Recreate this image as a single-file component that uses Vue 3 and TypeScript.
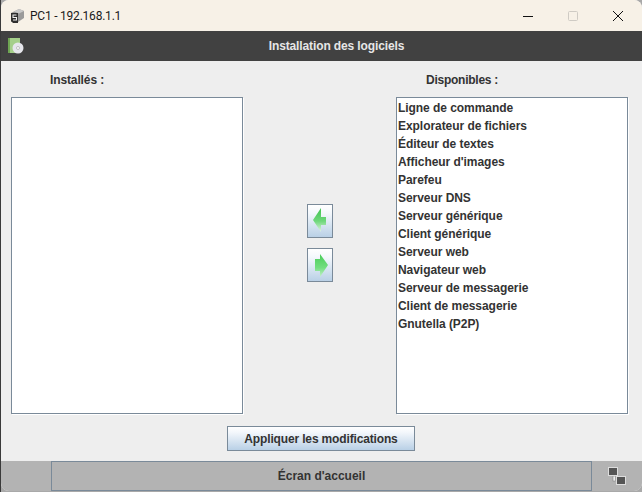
<script setup lang="ts">
const available: string[] = [
  'Ligne de commande', 'Explorateur de fichiers', 'Éditeur de textes', "Afficheur d'images",
  'Parefeu', 'Serveur DNS', 'Serveur générique', 'Client générique', 'Serveur web',
  'Navigateur web', 'Serveur de messagerie', 'Client de messagerie', 'Gnutella (P2P)',
]
</script>

<template>
  <div class="window">
    <header class="titlebar">
      <svg class="app-icon" width="13" height="16" viewBox="0 0 13 16">
        <path d="M0 5 L8 1 L13 3 L13 10 L7 14 L0 14 Z" fill="#9a9a9a" />
        <path d="M3 3.6 L8 1 L13 3 L8 5.6 Z" fill="#c9c9c9" />
        <path d="M0 5 L7 5 L7 15 L2 15 L0 13 Z" fill="#2e2e2e" />
        <path d="M5.5 7H2V9.5H5.5V12H2" fill="none" stroke="#f0f0f0" stroke-width="1.1" />
      </svg>
      <span class="title">PC1 - 192.168.1.1</span>
      <div class="controls">
        <svg width="12" height="12" viewBox="0 0 12 12"><path d="M1 6.5H11" stroke="#111" stroke-width="1" /></svg>
        <svg width="12" height="12" viewBox="0 0 12 12"><rect x="1.5" y="1.5" width="9" height="9" rx="1" fill="none" stroke="#cfcbc4" /></svg>
        <svg width="12" height="12" viewBox="0 0 12 12"><path d="M1 1L11 11M11 1L1 11" stroke="#111" stroke-width="1" /></svg>
      </div>
    </header>

    <div class="heading">
      <svg class="heading-icon" width="16" height="16" viewBox="0 0 16 16">
        <rect x="0" y="0" width="12" height="15" fill="#a5cf8a" />
        <rect x="0" y="0" width="2" height="15" fill="#6fa653" />
        <circle cx="10" cy="10" r="5.5" fill="#e6e6ec" />
        <circle cx="10" cy="10" r="1.5" fill="#fff" stroke="#a0a0a0" stroke-width=".6" />
      </svg>
      <span>Installation des logiciels</span>
    </div>

    <main class="content">
      <div class="columns">
        <section class="column">
          <h2 class="label label-left">Installés :</h2>
          <div class="list"></div>
        </section>

        <div class="transfer">
          <button class="arrow" aria-label="Retirer">
            <svg width="16" height="26" viewBox="0 0 16 26">
              <defs>
                <linearGradient id="gl" x1="0" y1="0" x2="0" y2="1">
                  <stop offset="0" stop-color="#3fc24f" />
                  <stop offset=".55" stop-color="#6fd87c" />
                  <stop offset="1" stop-color="#e4f5e6" />
                </linearGradient>
              </defs>
              <path d="M9 0 L1 12 L9 24 L9 17 L14 17 L14 9 L9 9 Z" fill="url(#gl)" />
            </svg>
          </button>
          <button class="arrow" aria-label="Ajouter">
            <svg width="16" height="26" viewBox="0 0 16 26">
              <defs>
                <linearGradient id="gr" x1="0" y1="0" x2="0" y2="1">
                  <stop offset="0" stop-color="#48cc58" />
                  <stop offset=".6" stop-color="#72de80" />
                  <stop offset="1" stop-color="#c5f0ca" />
                </linearGradient>
              </defs>
              <path d="M8 2 L16 13 L8 25 L8 19 L3 19 L3 7 L8 7 Z" fill="url(#gr)" />
            </svg>
          </button>
        </div>

        <section class="column">
          <h2 class="label label-right">Disponibles :</h2>
          <ul class="list">
            <li v-for="item in available" :key="item">{{ item }}</li>
          </ul>
        </section>
      </div>

      <div class="actions">
        <button class="apply">Appliquer les modifications</button>
      </div>
    </main>

    <footer class="status">
      <button class="home">Écran d'accueil</button>
      <div class="network">
        <svg width="18" height="18" viewBox="0 0 18 18">
          <rect x="5" y="9" width="2.5" height="5" fill="#eee" stroke="#777" stroke-width=".5" />
          <rect x="0.5" y="0.5" width="9" height="8" fill="#555" stroke="#ddd" />
          <rect x="8.5" y="9.5" width="9" height="8" fill="#555" stroke="#ddd" />
        </svg>
      </div>
    </footer>
  </div>
</template>

<style>
html, body {
  margin: 0;
  background: linear-gradient(90deg, #3a3a3a 1px, #a9a9a9 1px);
}
</style>

<style scoped>
.window {
  width: 641px;
  height: 491px;
  margin-left: 1px;
  display: flex;
  flex-direction: column;
  overflow: hidden;
  border-radius: 8px;
  background: #eeeeee;
  font-family: "Liberation Sans", Arial, sans-serif;
}
.titlebar {
  height: 31px;
  flex: none;
  display: flex;
  align-items: center;
  background: #f7f1e7;
  padding-left: 10px;
  box-sizing: border-box;
}
.title {
  margin-left: 6px;
  font: 12px Roboto, sans-serif;
  letter-spacing: -0.22px;
  color: #1a1a1a;
}
.controls {
  margin-left: auto;
  display: flex;
  align-items: center;
  gap: 33px;
  padding-right: 18px;
}
.heading {
  height: 30px;
  flex: none;
  position: relative;
  display: flex;
  align-items: center;
  justify-content: center;
  padding-left: 30px;
  box-sizing: border-box;
  background: #414141;
  color: #e6e6e6;
  font-size: 12px;
  font-weight: 700;
  letter-spacing: -0.12px;
}
.heading-icon {
  position: absolute;
  left: 7px;
  top: 7px;
}
.content {
  flex: 1;
  min-height: 0;
  display: flex;
  flex-direction: column;
}
.columns {
  display: flex;
  justify-content: space-between;
  align-items: stretch;
  padding: 0 14px 0 10px;
  height: 353px;
}
.column {
  width: 232px;
  display: flex;
  flex-direction: column;
}
.label {
  margin: 0;
  height: 36px;
  box-sizing: border-box;
  padding-top: 12px;
  font-size: 12px;
  line-height: 14px;
  font-weight: 700;
  letter-spacing: -0.12px;
  color: #333;
}
.label-left {
  padding-left: 39px;
}
.label-right {
  padding-left: 30px;
  letter-spacing: -0.25px;
}
.list {
  margin: 0;
  padding: 1px 0 0 1px;
  height: 317px;
  box-sizing: border-box;
  list-style: none;
  background: #fff;
  border: 1px solid #7a8a99;
  box-shadow: 1px 1px 0 #fff;
}
.list li {
  height: 18px;
  line-height: 18px;
  font-size: 12px;
  font-weight: 700;
  letter-spacing: -0.05px;
  color: #333;
}
.transfer {
  display: flex;
  flex-direction: column;
  gap: 10px;
  padding-top: 143px;
}
.arrow {
  width: 26px;
  height: 34px;
  padding: 0;
  display: flex;
  align-items: center;
  justify-content: center;
  box-sizing: border-box;
  border: 1px solid #7a8a99;
  background: linear-gradient(#ffffff 0%, #f4f8fc 25%, #b9d0e6 100%);
}
.actions {
  display: flex;
  justify-content: center;
  padding: 12px 0 0 0;
  margin-left: -1px;
}
.apply {
  width: 188px;
  height: 25px;
  padding: 0;
  box-sizing: border-box;
  border: 1px solid #7a8a99;
  background: linear-gradient(#ffffff 0%, #f2f6fb 25%, #b9d0e6 100%);
  font: 700 12px "Liberation Sans", Arial, sans-serif;
  letter-spacing: -0.15px;
  color: #333;
}
.status {
  height: 30px;
  flex: none;
  display: flex;
  background: #b3b3b3;
  box-sizing: border-box;
}
.home {
  margin-left: 50px;
  width: 541px;
  height: 30px;
  padding: 0;
  box-sizing: border-box;
  border: 1px solid #7a8a99;
  background: #b3b3b3;
  font: 700 12px "Liberation Sans", Arial, sans-serif;
  color: #333;
}
.network {
  flex: 1;
  display: flex;
  align-items: center;
  justify-content: center;
  padding-right: 1px;
}
</style>
